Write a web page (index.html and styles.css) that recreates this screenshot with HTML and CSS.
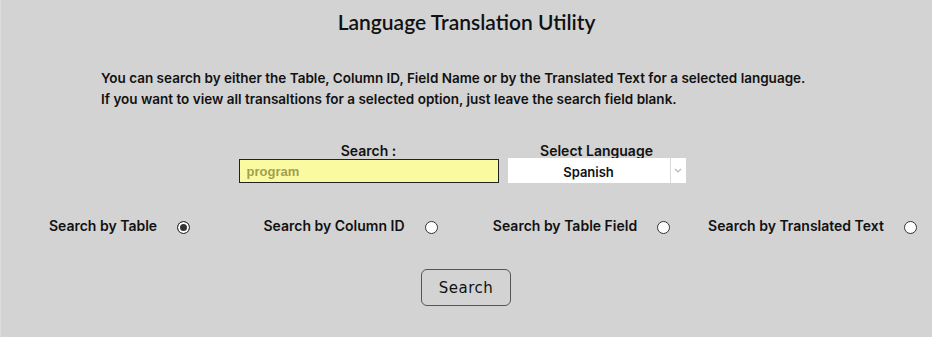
FILE: index.html
```html
<!DOCTYPE html>
<html lang="en">
<head>
    <meta charset="UTF-8">
    <title>Language Translation Utility</title>
    <link rel="stylesheet" href="styles.css">
</head>
<body>
    <div class="page">
        <h1 class="title">Language Translation Utility</h1>

        <p class="intro">
            You can search by either the Table, Column ID, Field Name or by the Translated Text for a selected language.<br>
            If you want to view all transaltions for a selected option, just leave the search field blank.
        </p>

        <div class="fields">
            <div class="field">
                <label class="field-label" for="searchText">Search :</label>
                <input class="search-input" id="searchText" type="text" value="program">
            </div>
            <div class="field">
                <label class="field-label" for="language">Select Language</label>
                <div class="select-box">
                    <span class="select-value">Spanish</span>
                    <span class="select-arrow">
                        <svg width="8" height="5" viewBox="0 0 8 5"><path d="M1 1 L4 4 L7 1" fill="none" stroke="#b8b8b8" stroke-width="1.2"/></svg>
                    </span>
                </div>
            </div>
        </div>

        <div class="options">
            <label class="option">Search by Table <input type="radio" name="mode" checked></label>
            <label class="option">Search by Column ID <input type="radio" name="mode"></label>
            <label class="option">Search by Table Field <input type="radio" name="mode"></label>
            <label class="option">Search by Translated Text <input type="radio" name="mode"></label>
        </div>

        <div class="actions">
            <button class="search-btn" type="button">Search</button>
        </div>
    </div>
</body>
</html>
```

FILE: styles.css
```css
body {
    margin: 0;
    background-color: #d3d3d3;
    font-family: Inter, "Open Sans", sans-serif;
    color: #111;
}
.page {
    height: 337px;
    border-left: 1px solid #dcdcdc;
    box-sizing: border-box;
}
.title {
    margin: 0;
    padding-top: 8px;
    text-align: center;
    font-family: Lato, sans-serif;
    font-size: 21px;
    font-weight: 600;
    line-height: 28px;
}
.intro {
    margin: 32px 0 0 100px;
    font-size: 13.5px;
    font-weight: 600;
    line-height: 21px;
}
.fields {
    display: flex;
    justify-content: center;
    gap: 9px;
    margin: 32px 9px 0 0;
}
.field {
    display: flex;
    flex-direction: column;
    align-items: center;
}
.field-label {
    font-size: 14px;
    font-weight: 600;
    line-height: 17px;
}
.search-input {
    width: 260px;
    height: 24px;
    box-sizing: border-box;
    margin: 0;
    padding: 0 7px;
    border: 1px solid #222;
    background: #fafaa0;
    color: #a0a050;
    font-family: "Liberation Sans", Arial, sans-serif;
    font-size: 13px;
    font-weight: 700;
    outline: none;
}
.select-box {
    display: flex;
    width: 178px;
    height: 25px;
    margin-top: -1px;
    background: #fff;
}
.select-value {
    flex: 1;
    display: flex;
    align-items: center;
    justify-content: center;
    font-size: 13px;
    font-weight: 600;
    padding-top: 2px;
}
.select-arrow {
    width: 15px;
    display: flex;
    align-items: center;
    justify-content: center;
    border-left: 1px solid #d8d8d8;
}
.options {
    display: grid;
    grid-template-columns: repeat(4, 1fr);
    justify-items: center;
    margin-top: 34px;
    padding: 0 4px 0 3px;
}
.option {
    display: flex;
    align-items: center;
    gap: 20px;
    font-size: 14px;
    font-weight: 600;
}
.option input {
    appearance: none;
    width: 13px;
    height: 13px;
    margin: 3px 0 0 0;
    border: 1px solid #333;
    border-radius: 50%;
    background: #fff;
    box-sizing: border-box;
}
.option input:checked {
    background: #333;
    box-shadow: inset 0 0 0 2px #fff;
}
.actions {
    display: flex;
    justify-content: center;
    margin-top: 35px;
    padding-right: 1px;
}
.search-btn {
    width: 90px;
    height: 37px;
    border: 1px solid #555;
    border-radius: 6px;
    background: #d3d3d3;
    font-family: "DejaVu Sans", Verdana, sans-serif;
    font-size: 15px;
    letter-spacing: 0.5px;
    color: #111;
}
```
